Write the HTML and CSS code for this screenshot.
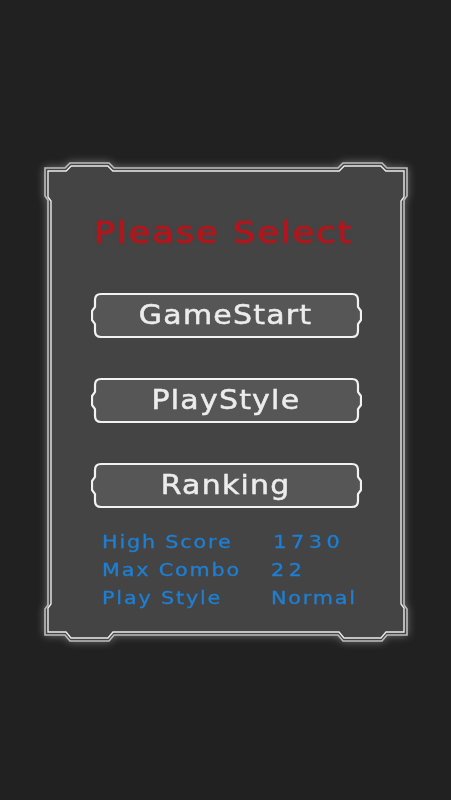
FILE: index.html
```html
<!DOCTYPE html>
<html>
<head>
<meta charset="utf-8">
<link rel="stylesheet" href="styles.css">
</head>
<body>
<div class="screen">
  <div class="panel">
    <svg class="frame" viewBox="0 0 366 482" width="366" height="482">
      <path class="frame-outer" d="M2,7 H22 L27,2 H66 L71,7 H295 L300,2 H339 L344,7 H364 V35 L361,39 V444 L364,448 V474 H344 L339,480 H300 L295,474 H71 L66,480 H27 L22,474 H2 V448 L5,444 V39 L2,35 Z"/>
      <path class="frame-inner" d="M5,10 H23.2 L28.2,5 H64.8 L69.8,10 H296.2 L301.2,5 H337.8 L342.8,10 H361 V36 L358,40 V443 L361,447 V471 H343 L338,477 H301 L296,471 H70 L65,477 H28 L23,471 H5 V447 L8,443 V40 L5,36 Z"/>
    </svg>
    <h1 class="title">Please Select</h1>
    <div class="menu">
      <button class="btn">
        <svg class="btn-shape" viewBox="0 0 271 47" width="271" height="47"><path d="M10,2 H261 Q267,2 267,8 V15 L270,19 V28 L267,32 V39 Q267,45 261,45 H10 Q4,45 4,39 V32 L1,28 V19 L4,15 V8 Q4,2 10,2 Z"/></svg>
        <span class="btn-label">GameStart</span>
      </button>
      <button class="btn">
        <svg class="btn-shape" viewBox="0 0 271 47" width="271" height="47"><path d="M10,2 H261 Q267,2 267,8 V15 L270,19 V28 L267,32 V39 Q267,45 261,45 H10 Q4,45 4,39 V32 L1,28 V19 L4,15 V8 Q4,2 10,2 Z"/></svg>
        <span class="btn-label">PlayStyle</span>
      </button>
      <button class="btn">
        <svg class="btn-shape" viewBox="0 0 271 47" width="271" height="47"><path d="M10,2 H261 Q267,2 267,8 V15 L270,19 V28 L267,32 V39 Q267,45 261,45 H10 Q4,45 4,39 V32 L1,28 V19 L4,15 V8 Q4,2 10,2 Z"/></svg>
        <span class="btn-label">Ranking</span>
      </button>
    </div>
    <dl class="stats">
      <dt>High Score</dt><dd class="v-score">1730</dd>
      <dt>Max Combo</dt><dd class="v-num">22</dd>
      <dt>Play Style</dt><dd>Normal</dd>
    </dl>
  </div>
</div>
</body>
</html>
```

FILE: styles.css
```css
html, body {
  margin: 0;
  padding: 0;
  background: #212121;
}
body {
  width: 451px;
  height: 800px;
  overflow: hidden;
  font-family: "DejaVu Sans", "Liberation Sans", sans-serif;
}
.screen {
  height: 800px;
  padding-top: 161px;
  padding-left: 43px;
  box-sizing: border-box;
}
.panel {
  position: relative;
  width: 366px;
  height: 482px;
  display: flex;
  flex-direction: column;
  align-items: center;
}
.frame {
  position: absolute;
  left: 0;
  top: 0;
  overflow: visible;
}
.frame-outer {
  fill: #444444;
  stroke: #bdbdbd;
  stroke-width: 1.6;
  filter: drop-shadow(0 0 4px rgba(255,255,255,0.35));
}
.frame-inner {
  fill: #444444;
  stroke: #ececec;
  stroke-width: 1.4;
}
.title {
  position: relative;
  margin: 51px 0 0 -6px;
  height: 40px;
  line-height: 40px;
  font-size: 31px;
  font-weight: normal;
  letter-spacing: 1.5px;
  padding-left: 1.5px;
  color: #b2161c;
  -webkit-text-stroke: 0.5px #b2161c;
  text-shadow: 0 0 2px rgba(200, 20, 20, 0.55);
  transform: scaleX(1.15);
}
.menu {
  position: relative;
  margin-top: 40px;
  display: flex;
  flex-direction: column;
  gap: 38px;
}
.btn {
  position: relative;
  width: 271px;
  height: 47px;
  padding: 0;
  border: 0;
  background: transparent;
  font-family: inherit;
  display: flex;
  align-items: center;
  justify-content: center;
}
.btn-shape {
  position: absolute;
  left: 0;
  top: 0;
}
.btn-shape path {
  fill: #565656;
  stroke: #f2f2f2;
  stroke-width: 2.2;
}
.btn-label {
  position: relative;
  display: inline-block;
  font-size: 26px;
  letter-spacing: 1.1px;
  padding-left: 1.1px;
  color: #ececec;
  -webkit-text-stroke: 0.5px #ececec;
  line-height: 47px;
  transform: scaleX(1.15);
  margin-left: -2px;
}
.stats {
  position: relative;
  align-self: stretch;
  margin: 19px 0 0 0;
  padding-left: 59px;
  display: grid;
  grid-template-columns: 169px auto;
  font-size: 18px;
  line-height: 28px;
  letter-spacing: 1.6px;
  color: #1f7fd2;
  -webkit-text-stroke: 0.35px #1f7fd2;
}
.stats dt, .stats dd {
  margin: 0;
  transform: scaleX(1.15);
  transform-origin: left center;
  white-space: nowrap;
}
.v-score {
  padding-left: 2px;
  letter-spacing: 4px;
}
.v-num {
  letter-spacing: 4px;
}
```
